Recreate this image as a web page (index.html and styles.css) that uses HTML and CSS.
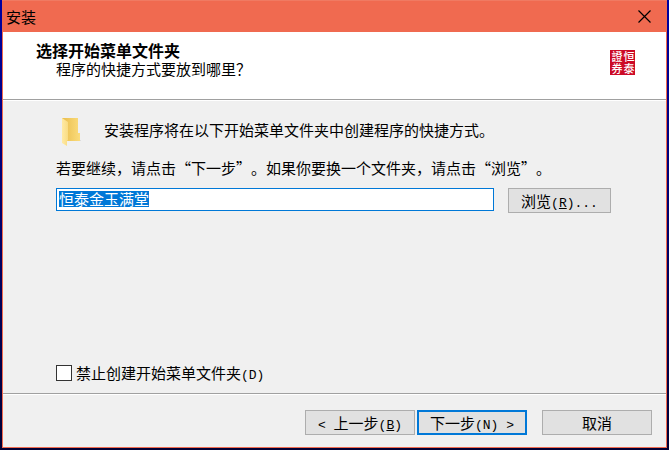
FILE: index.html
```html
<!DOCTYPE html>
<html lang="zh-CN">

<head>
    <meta charset="UTF-8">
    <meta name="viewport" content="width=device-width, initial-scale=1.0">
    <title>安装</title>
    <link rel="stylesheet" href="styles.css">
</head>

<body>
    <form class="window" onsubmit="return false">
        <div class="titlebar">
            <span>安装</span>
            <button type="button" class="close" aria-label="关闭">
                <svg width="13" height="13" viewBox="0 0 13 13"><path d="M.5 .5L12.5 12.5M12.5 .5L.5 12.5" stroke="#000" stroke-width="1.2" fill="none"/></svg>
            </button>
        </div>
        <header class="header">
            <div>
                <h1>选择开始菜单文件夹</h1>
                <p>程序的快捷方式要放到哪里？</p>
            </div>
            <div class="seal"><span>證</span><span>恒</span><span>券</span><span>泰</span></div>
        </header>
        <main class="content">
            <div class="intro">
                <svg width="20" height="29" viewBox="0 0 20 29">
                    <defs>
                        <linearGradient id="back" x1="0" x2="1"><stop offset="0" stop-color="#e9bd4d"/><stop offset="1" stop-color="#fbdc7c"/></linearGradient>
                        <linearGradient id="front" x1="0" x2="1"><stop offset="0" stop-color="#ffeaa5"/><stop offset="1" stop-color="#f9dc83"/></linearGradient>
                    </defs>
                    <path d="M1 0H17V15H19V23H6L1 20Z" fill="url(#back)"/>
                    <path d="M1 0L7 4V22L6 23V28L1 25Z" fill="url(#front)"/>
                    <path d="M19 22.5H20" stroke="#ddd"/>
                </svg>
                <p>安装程序将在以下开始菜单文件夹中创建程序的快捷方式。</p>
            </div>
            <label class="hint" for="folder">若要继续，请点击“下一步”。如果你要换一个文件夹，请点击“浏览”。</label>
            <div class="row">
                <div class="field"><input type="text" class="folder" id="folder" value="恒泰金玉满堂"></div>
                <button type="button" class="btn browse">浏览<span class="key">(<u>R</u>)...</span></button>
            </div>
            <label class="check"><input type="checkbox"><span>禁止创建开始菜单文件夹<span class="key">(D)</span></span></label>
        </main>
        <footer class="footer">
            <button type="button" class="btn"><span class="key">&lt; </span>上一步<span class="key">(<u>B</u>)</span></button>
            <button type="submit" class="btn next">下一步<span class="key">(N) &gt;</span></button>
            <button type="button" class="btn cancel">取消</button>
        </footer>
    </form>

    <script>
        var folder = document.getElementById("folder")
        folder.focus()
        folder.select()
    </script>
</body>

</html>
```

FILE: styles.css
```css
*{margin: 0;padding: 0;box-sizing: border-box;}
body{background: linear-gradient(#0000a0, #000034);font-family: "Noto Sans CJK SC", sans-serif;font-size: 15px;line-height: 18px;color: #000;text-spacing-trim: space-all;font-kerning: none;font-feature-settings: "chws" 0;}
button, input{font: inherit;color: inherit;}
.window{display: flex;flex-direction: column;height: 100vh;padding: 0 2px 2px;}
.titlebar{display: flex;align-items: center;justify-content: space-between;height: 32px;padding: 0 16px 0 4px;background: #f06a50;border-top: 1px solid #f07a62;}
.close{display: flex;background: none;border: 0;}
.header, .content, .footer{border: solid #f06a50;border-width: 0 1px;}
.header{display: flex;justify-content: space-between;height: 68px;padding: 8px 31px 0 33px;background: #fff;box-shadow: inset 0 -1px #a0a0a0;}
.header h1{font-size: 16px;line-height: 20px;}
.header p{padding-left: 20px;}
.seal{display: grid;grid-template-columns: 12px 12px;grid-auto-rows: 12px;width: 25px;height: 25px;margin-top: 10px;padding-left: 1px;background: #cc0a26;color: #fff;font-size: 11px;line-height: 12px;font-weight: 500;text-align: center;}
.content{display: flex;flex-direction: column;flex: 1;padding: 18px 55px 11px 53px;background: #f0f0f0;border-top: 0;box-shadow: inset 0 1px #fff;}
.intro{display: flex;align-items: center;gap: 23px;padding-left: 5px;height: 29px;margin-bottom: 12px;}
.intro p{margin-bottom: 6px;}
.row{display: flex;gap: 14px;margin-top: 11px;}
.field{flex: 1;min-width: 0;height: 23px;padding: 2px;border: 1px solid #0078d7;background: #fff;}
.folder{display: block;width: 100%;height: 16px;border: 0;background: none;outline: 0;}
.folder::selection{background: #0078d7;color: #fff;}
.btn{width: 110px;height: 25px;background: #e1e1e1;border: 1px solid #adadad;line-height: 18px;white-space: pre;}
.browse{width: 103px;}
.key{font-family: "Liberation Mono", monospace;font-size: 13px;line-height: 1;}
.check{display: flex;align-items: center;gap: 4px;margin-top: auto;align-self: flex-start;}
.check input{appearance: none;width: 16px;height: 16px;border: 1px solid #333;background: #fff;}
.check input:checked{background: #0078d7;}
.footer{display: flex;justify-content: flex-end;height: 55px;padding: 17px 14px 0;background: #f0f0f0;border-bottom: 1px solid #f06a50;box-shadow: inset 0 1px #a0a0a0, inset 0 2px #fff;}
.next{margin-left: 2px;border: 2px solid #0078d7;}
.cancel{margin-left: 15px;}
```
